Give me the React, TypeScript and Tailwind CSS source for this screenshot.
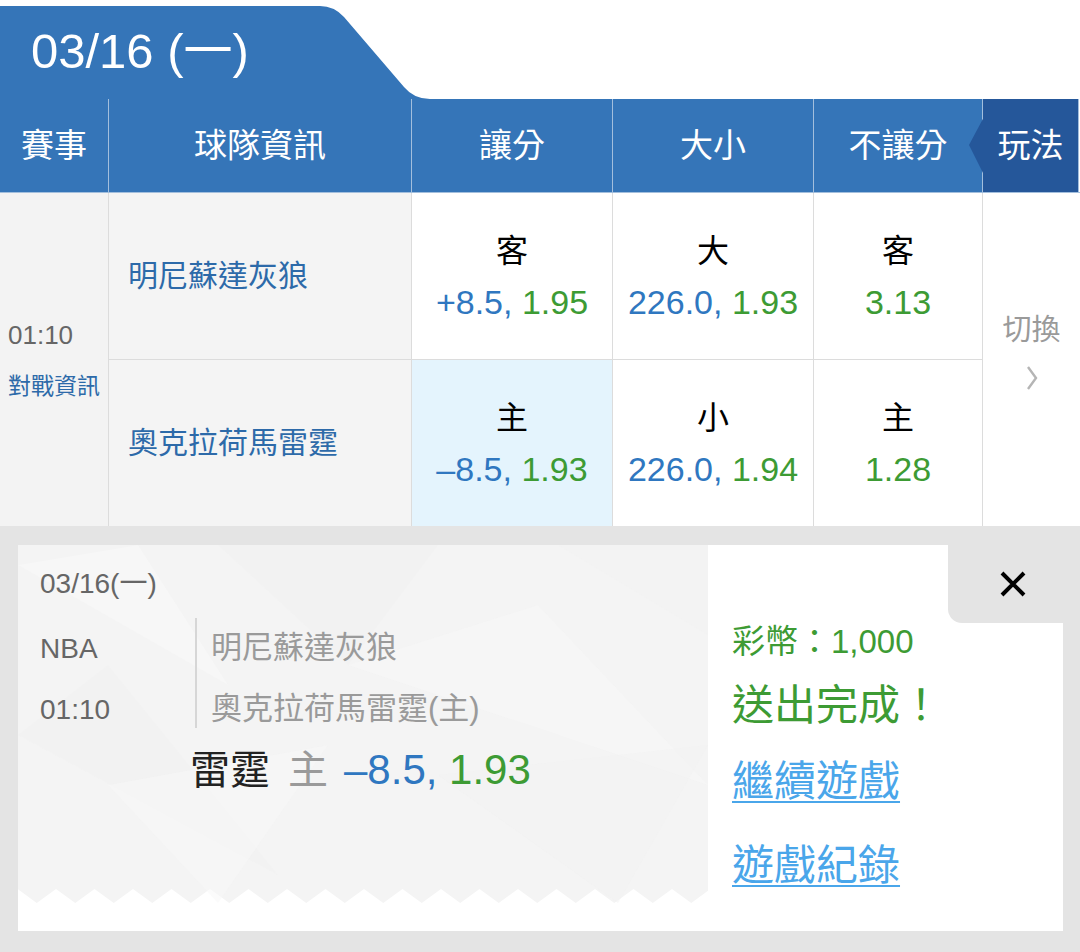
import React from 'react';

type Odd = { label: string; line?: string; price: string; selected?: boolean };

const row1: Odd[] = [
  { label: '客', line: '+8.5,', price: '1.95' },
  { label: '大', line: '226.0,', price: '1.93' },
  { label: '客', price: '3.13' },
];
const row2: Odd[] = [
  { label: '主', line: '–8.5,', price: '1.93', selected: true },
  { label: '小', line: '226.0,', price: '1.94' },
  { label: '主', price: '1.28' },
];

const OddCell = ({ odd }: { odd: Odd }) => (
  <div className={`flex flex-col items-center pt-[40px] ${odd.selected ? 'bg-[#e4f4fd]' : 'bg-white'}`}>
    <span className="text-[32px] leading-[36px] text-black">{odd.label}</span>
    <span className="mt-[13px] text-[34px] leading-[40px] whitespace-pre">
      {odd.line && <span className="text-[#2f77c0]">{odd.line} </span>}
      <span className="text-[#3d9b34]">{odd.price}</span>
    </span>
  </div>
);

// zigzag bottom edge for the ticket pattern
const zigzag = () => {
  const pts: string[] = [];
  for (let k = -1; k < 20; k++) {
    const px = 38 + 38.5 * k;
    pts.push(`${px - 19.25},358`);
    pts.push(`${px},344`);
  }
  return `0,0 690,0 690,358 ${pts.reverse().join(' ')} 0,358`;
};

const App = () => {
  return (
    <div className="w-[1080px] h-[952px] flex flex-col bg-white font-['Liberation_Sans','Noto_Sans_CJK_TC',sans-serif] overflow-hidden">
      {/* date tab */}
      <div className="h-[99px] pt-[6px] flex">
        <div className="w-[312px] h-full bg-[#3575b8] flex items-center pl-[31px] pb-[4px]">
          <span className="text-white text-[49px] leading-[56px] whitespace-pre">03/16 (一)</span>
        </div>
        <svg width="120" height="93" viewBox="0 0 120 93" className="block">
          <path d="M0 0 H8 Q22 0 32 11 L92 81 Q102 93 118 93 H120 V93 H0 Z" fill="#3575b8" />
        </svg>
      </div>

      {/* header */}
      <div className="grid grid-cols-[108px_302px_200px_200px_168px_95px_1px] gap-x-px bg-[#a3bfdd] pb-px">
        {['賽事', '球隊資訊', '讓分', '大小', '不讓分'].map((t) => (
          <div key={t} className="h-[93px] bg-[#3575b8] flex items-center justify-center text-white text-[33px] leading-[40px]">
            {t}
          </div>
        ))}
        <div className="relative h-[93px] bg-[#25579a] flex items-center justify-center text-white text-[33px] leading-[40px]">
          <svg width="15" height="58" viewBox="0 0 15 58" className="absolute left-[-15px] top-[18px]">
            <path d="M16 0 L1 28 L16 58 Z" fill="#25579a" />
          </svg>
          玩法
        </div>
        <div className="h-[93px] bg-white" />
      </div>

      {/* table body */}
      <div className="grid grid-cols-[108px_302px_200px_200px_168px_97px] grid-rows-[166px_166px] gap-px bg-[#dcdcdc]">
        <div className="row-span-2 bg-[#f3f3f3] flex flex-col pl-[8px] pt-[127px]">
          <span className="text-[26px] leading-[30px] text-[#666]">01:10</span>
          <span className="mt-[23px] text-[23px] leading-[26px] text-[#2d6aa9]">對戰資訊</span>
        </div>
        <div className="bg-[#f4f4f4] flex items-center pl-[19px] text-[30px] leading-[36px] text-[#2d6aa9]">明尼蘇達灰狼</div>
        {row1.map((o, i) => (
          <OddCell key={i} odd={o} />
        ))}
        <div className="row-span-2 bg-white flex flex-col items-center pt-[120px]">
          <span className="text-[29px] leading-[34px] text-[#9a9a9a]">切換</span>
          <svg width="14" height="26" viewBox="0 0 14 26" className="mt-[18px]">
            <path d="M3 2 L11 13 L3 24" fill="none" stroke="#b5b5b5" strokeWidth="2.4" />
          </svg>
        </div>
        <div className="bg-[#f4f4f4] flex items-center pl-[19px] text-[30px] leading-[36px] text-[#2d6aa9]">奧克拉荷馬雷霆</div>
        {row2.map((o, i) => (
          <OddCell key={i} odd={o} />
        ))}
      </div>

      {/* bet result panel */}
      <div className="flex-1 bg-[#e4e4e4] pt-[19px] pl-[18px]">
        <div className="w-[1045px] h-[386px] flex">
          <div className="relative w-[690px] h-full bg-white">
            <svg width="690" height="386" viewBox="0 0 690 386" className="absolute inset-0">
              <polygon points={zigzag()} fill="#f4f4f4" />
              <polygon points="0,20 120,0 210,140" fill="#fafafa" opacity="0.5" />
              <polygon points="200,0 420,0 330,120" fill="#efefef" opacity="0.4" />
              <polygon points="0,190 90,120 260,330" fill="#f0f0f0" opacity="0.4" />
              <polygon points="330,120 520,60 690,240" fill="#f8f8f8" opacity="0.5" />
              <polygon points="420,230 690,200 600,358" fill="#f1f1f1" opacity="0.5" />
              <polygon points="90,240 310,200 200,358" fill="#f8f8f8" opacity="0.5" />
              <polygon points="540,0 690,0 690,90" fill="#f1f1f1" opacity="0.5" />
            </svg>
            <div className="relative flex flex-col pl-[22px] pt-[22px]">
              <span className="text-[28px] leading-[34px] text-[#666]">03/16(一)</span>
              <div className="mt-[17px] flex">
                <div className="w-[155px] flex flex-col text-[28px] text-[#666]">
                  <span className="h-[61px] flex items-center">NBA</span>
                  <span className="h-[61px] flex items-center">01:10</span>
                </div>
                <div className="w-[2px] h-[110px] bg-[#d6d6d6]" />
                <div className="pl-[14px] flex flex-col text-[31px] text-[#9a9a9a]">
                  <span className="h-[61px] flex items-center">明尼蘇達灰狼</span>
                  <span className="h-[61px] flex items-center">奧克拉荷馬雷霆(主)</span>
                </div>
              </div>
              <div className="mt-[5px] pl-[150px] flex items-center h-[50px] whitespace-pre">
                <span className="text-[40px] leading-[50px] text-[#222]">雷霆</span>
                <span className="ml-[18px] text-[40px] leading-[50px] text-[#9a9a9a]">主</span>
                <span className="ml-[16px] text-[42px] leading-[50px] text-[#2f77c0]">–8.5, </span>
                <span className="text-[42px] leading-[50px] text-[#3d9b34]">1.93</span>
              </div>
            </div>
          </div>

          <div className="flex-1 flex flex-col bg-white">
            <div className="h-[78px] flex justify-end bg-white">
              <div className="w-[115px] h-full bg-[#e4e4e4] rounded-bl-[14px] flex items-center justify-center">
                <svg width="28" height="28" viewBox="0 0 28 28" className="ml-[15px]">
                  <path d="M3 3 L25 25 M25 3 L3 25" stroke="#000" strokeWidth="4" />
                </svg>
              </div>
            </div>
            <div className="flex flex-col items-start pl-[24px]">
              <span className="text-[33px] leading-[38px] text-[#3d9b34]">彩幣：1,000</span>
              <span className="mt-[20px] text-[42px] leading-[50px] text-[#3d9b34]">送出完成！</span>
              <span className="mt-[26px] text-[42px] leading-[50px] text-[#4aa6ea] underline decoration-2 underline-offset-[5px]">繼續遊戲</span>
              <span className="mt-[34px] text-[42px] leading-[50px] text-[#4aa6ea] underline decoration-2 underline-offset-[5px]">遊戲紀錄</span>
            </div>
          </div>
        </div>
      </div>
    </div>
  );
};

export default App;
